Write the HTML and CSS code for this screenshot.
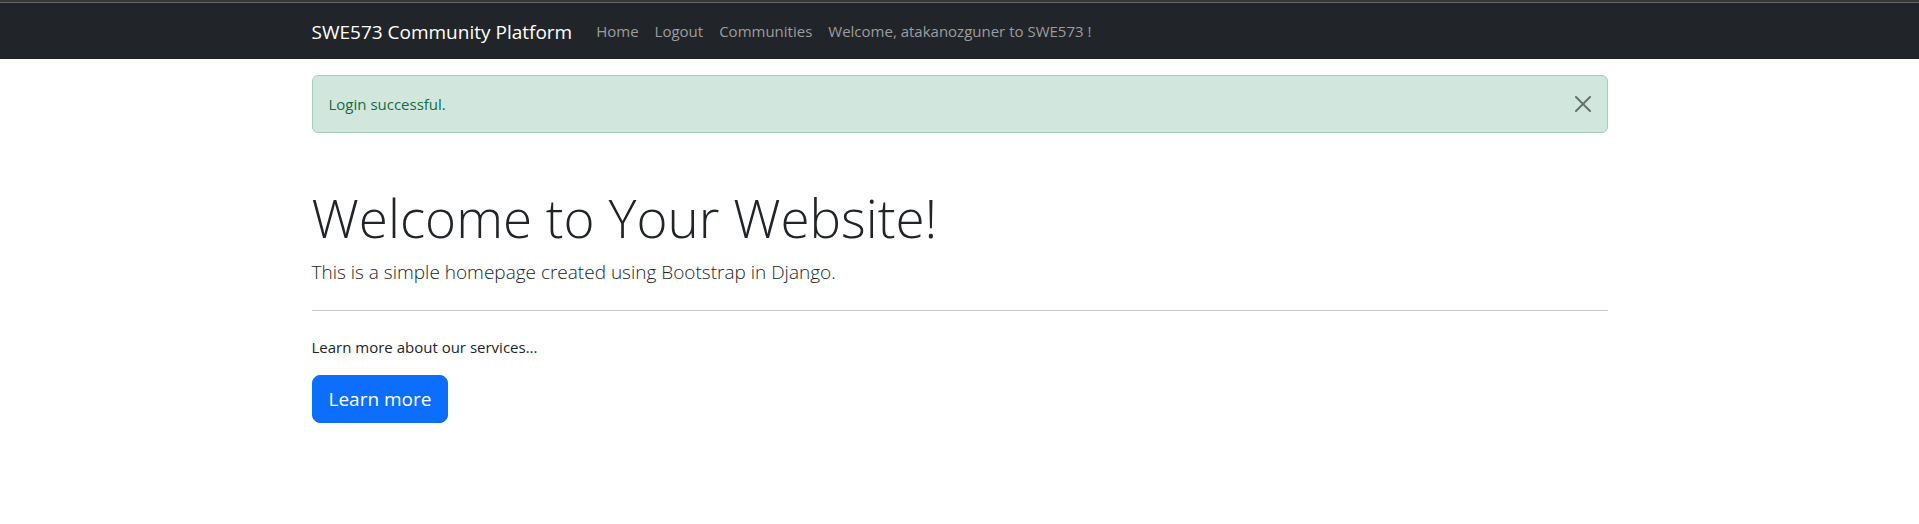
FILE: index.html
```html
<!DOCTYPE html>
<html lang="en">
<head>
<meta charset="utf-8">
<title>SWE573 Community Platform</title>
<link rel="stylesheet" href="styles.css">
</head>
<body>
<nav class="navbar">
  <div class="container navbar-inner">
    <a class="brand" href="#">SWE573 Community Platform</a>
    <ul class="nav">
      <li><a class="nav-link" href="#">Home</a></li>
      <li><a class="nav-link" href="#">Logout</a></li>
      <li><a class="nav-link" href="#">Communities</a></li>
      <li><span class="nav-link">Welcome, atakanozguner to SWE573 !</span></li>
    </ul>
  </div>
</nav>
<main class="container">
  <div class="alert" role="alert">
    <span>Login successful.</span>
    <button class="close" type="button" aria-label="Close">
      <svg viewBox="0 0 16 16" width="16" height="16" aria-hidden="true"><path d="M.293.293a1 1 0 0 1 1.414 0L8 6.586 14.293.293a1 1 0 1 1 1.414 1.414L9.414 8l6.293 6.293a1 1 0 0 1-1.414 1.414L8 9.414l-6.293 6.293a1 1 0 0 1-1.414-1.414L6.586 8 .293 1.707a1 1 0 0 1 0-1.414z"/></svg>
    </button>
  </div>
  <section class="hero">
    <h1 class="title">Welcome to Your Website!</h1>
    <p class="lead">This is a simple homepage created using Bootstrap in Django.</p>
    <hr class="rule">
    <p class="text">Learn more about our services...</p>
    <a class="button" href="#">Learn more</a>
  </section>
</main>
</body>
</html>
```
FILE: styles.css
```css
* { box-sizing: border-box; }
body {
  margin: 0;
  background: #fff;
  color: #212529;
  font-family: "Segoe UI", "Open Sans", "Noto Sans", sans-serif;
  font-size: 15px;
  line-height: 24px;
}
.container {
  max-width: 1320px;
  margin: 0 auto;
  padding: 0 12px;
}
.navbar {
  border-top: 2px solid #363636;
  background: #212529;
  box-shadow: inset 0 1px #666;
  padding: 9px 0 8px;
}
.navbar-inner { display: flex; align-items: center; }
.brand {
  margin-right: 16px;
  padding: 6px 0 4px;
  color: #fff;
  font-size: 19px;
  line-height: 30px;
  text-decoration: none;
  white-space: nowrap;
}
.nav {
  display: flex;
  margin: 0;
  padding: 0;
  list-style: none;
}
.nav-link {
  display: block;
  padding: 8px;
  color: #9b9d9e;
  text-decoration: none;
  white-space: nowrap;
}
.alert {
  display: flex;
  align-items: center;
  justify-content: space-between;
  margin-top: 16px;
  padding: 16px;
  border: 1px solid #a3cfbb;
  border-radius: 6px;
  background: #d1e7dd;
  color: #146c43;
}
.close {
  display: flex;
  padding: 0;
  border: 0;
  background: none;
  opacity: 0.5;
}
.hero { margin-top: 51px; }
.title {
  margin: 0 0 6px;
  font-size: 53px;
  font-weight: 300;
  line-height: 67px;
}
.lead {
  margin: 0;
  font-size: 19px;
  font-weight: 300;
  line-height: 30px;
}
.rule {
  margin: 23px 0 24px;
  border: 0;
  border-top: 1px solid #c7c8c9;
}
.text { margin: 0 0 16px; }
.button {
  display: inline-block;
  padding: 8px 16px;
  border: 1px solid #0d6efd;
  border-radius: 8px;
  background: #0d6efd;
  color: #fff;
  font-size: 19px;
  line-height: 30px;
  text-decoration: none;
}
```
